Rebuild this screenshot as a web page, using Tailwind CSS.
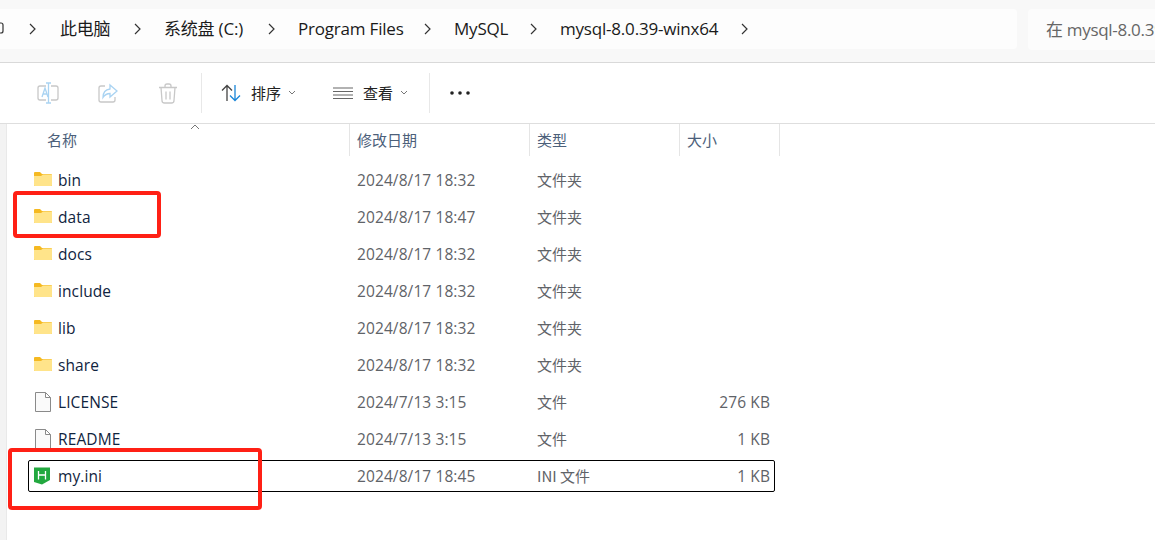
<!DOCTYPE html>
<html lang="zh"><head><meta charset="utf-8">
<script src="https://cdn.jsdelivr.net/npm/@tailwindcss/browser@4"></script>
</head>
<body class="bg-white overflow-hidden">
<div class="relative w-[1155px] h-[540px] overflow-hidden font-['Open_Sans','Noto_Sans_CJK_SC',sans-serif] text-[#1a1a1a]">
  <!-- address bar -->
  <div class="h-[63px] bg-[#f8f8f8] border-b border-[#d9d9d9] pt-[9px] flex gap-[11px]">
    <div class="w-[1017px] h-[40px] bg-[#fdfdfd] rounded-r-[4px] flex items-center text-[17px] tracking-[-0.2px]">
      <svg class="ml-[-7px] w-[12px] h-[16px] mt-[-1px] shrink-0" viewBox="0 0 12 16" fill="none" stroke="#333" stroke-width="1.2"><rect x="-2" y="2" width="12" height="10" rx="2"/><path d="M3 14h4"/></svg>
      <svg class="ml-[23px] w-[9px] h-[12px] shrink-0" viewBox="0 0 9 12" fill="none" stroke="#333" stroke-width="1.2"><path d="M2 1l5 5-5 5"/></svg>
      <span class="ml-[23px] w-[55px] shrink-0">此电脑</span>
      <svg class="ml-[18px] w-[9px] h-[12px] shrink-0" viewBox="0 0 9 12" fill="none" stroke="#333" stroke-width="1.2"><path d="M2 1l5 5-5 5"/></svg>
      <span class="ml-[22px] w-[82px] shrink-0 whitespace-nowrap">系统盘 (C:)</span>
      <svg class="ml-[21px] w-[9px] h-[12px] shrink-0" viewBox="0 0 9 12" fill="none" stroke="#333" stroke-width="1.2"><path d="M2 1l5 5-5 5"/></svg>
      <span class="ml-[22px] w-[105px] shrink-0 whitespace-nowrap">Program Files</span>
      <svg class="ml-[20px] w-[9px] h-[12px] shrink-0" viewBox="0 0 9 12" fill="none" stroke="#333" stroke-width="1.2"><path d="M2 1l5 5-5 5"/></svg>
      <span class="ml-[22px] w-[55px] shrink-0 whitespace-nowrap">MySQL</span>
      <svg class="ml-[20px] w-[9px] h-[12px] shrink-0" viewBox="0 0 9 12" fill="none" stroke="#333" stroke-width="1.2"><path d="M2 1l5 5-5 5"/></svg>
      <span class="ml-[22px] w-[159px] shrink-0 whitespace-nowrap">mysql-8.0.39-winx64</span>
      <svg class="ml-[21px] w-[9px] h-[12px] shrink-0" viewBox="0 0 9 12" fill="none" stroke="#333" stroke-width="1.2"><path d="M2 1l5 5-5 5"/></svg>
    </div>
    <div class="flex-1 h-[41px] bg-[#fcfcfc] rounded-l-[4px] flex items-center pl-[18px] text-[17px] text-[#666] whitespace-nowrap overflow-hidden tracking-[-0.3px]">在 mysql-8.0.39-winx64 中搜索</div>
  </div>
  <!-- toolbar -->
  <div class="h-[61px] bg-white border-b border-[#dedede] flex items-center text-[15px]">
    <svg class="ml-[37px] w-[22px] h-[22px] shrink-0" viewBox="0 0 22 22" fill="none" stroke-width="1.3"><path d="M9 4H3a2 2 0 0 0-2 2v10a2 2 0 0 0 2 2h6M14 4h5a2 2 0 0 1 2 2v10a2 2 0 0 1-2 2h-5" stroke="#c8c8c8"/><path d="M11.500 1v20M9 1h5M9 21h5" stroke="#a9d3f2"/><path d="M5 15l3-9 3 9M6 12h4" stroke="#a9d3f2"/></svg>
    <svg class="ml-[39px] w-[20px] h-[21px] shrink-0" viewBox="0 0 20 21" fill="none" stroke-width="1.3"><path d="M7 3H3a2 2 0 0 0-2 2v12a2 2 0 0 0 2 2h12a2 2 0 0 0 2-2v-3" stroke="#c8c8c8"/><path d="M12 2l7 6-7 6v-3.500c-3 0-5 1-7 4 0-5 3-8 7-8.500z" stroke="#a9d3f2"/></svg>
    <svg class="ml-[40px] w-[20px] h-[21px] shrink-0" viewBox="0 0 20 21" fill="none" stroke="#c8c8c8" stroke-width="1.3"><path d="M1 4.500h18M7 4.500V3a2 2 0 0 1 2-2h2a2 2 0 0 1 2 2v1.500M3 4.500l1 13a2.500 2.500 0 0 0 2.500 2.500h7a2.500 2.500 0 0 0 2.500-2.500l1-13M8 8.500v8M12 8.500v8"/></svg>
    <div class="ml-[23px] w-px h-[40px] bg-[#e8e8e8] shrink-0"></div>
    <svg class="ml-[19px] w-[21px] h-[18px] shrink-0" viewBox="0 0 21 18" fill="none" stroke-width="1.3"><path d="M6 17V1.500M1 6.500l5-5 5 5" stroke="#444"/><path d="M14 1v15.500M9 11.500l5 5 5-5" stroke="#1a86d8"/></svg>
    <span class="ml-[9px] w-[30px] shrink-0 font-['Noto_Sans_CJK_SC'] text-[#222]">排序</span>
    <svg class="ml-[7px] w-[8px] h-[6px] shrink-0" viewBox="0 0 8 6" fill="none" stroke="#777"><path d="M1 1l3 3 3-3"/></svg>
    <svg class="ml-[37px] w-[20px] h-[13px] shrink-0" viewBox="0 0 20 13" fill="none" stroke="#666" stroke-width="1.200"><path d="M0 1h20M0 4.500h20M0 8h20M0 11.500h20"/></svg>
    <span class="ml-[10px] w-[30px] shrink-0 font-['Noto_Sans_CJK_SC'] text-[#222]">查看</span>
    <svg class="ml-[7px] w-[8px] h-[6px] shrink-0" viewBox="0 0 8 6" fill="none" stroke="#777"><path d="M1 1l3 3 3-3"/></svg>
    <div class="ml-[21px] w-px h-[40px] bg-[#e8e8e8] shrink-0"></div>
    <svg class="ml-[20px] w-[20px] h-[4px] shrink-0" viewBox="0 0 20 4" fill="#222"><circle cx="2" cy="2" r="1.800"/><circle cx="10" cy="2" r="1.800"/><circle cx="18" cy="2" r="1.800"/></svg>
  </div>
  <!-- list -->
  <div class="flex h-[416px]">
    <div class="w-[7px] bg-[#f3f3f3] border-r border-[#e9e9e9]"></div>
    <div class="flex-1 relative">
      <!-- header -->
      <div class="h-[32px] flex items-stretch text-[15px] text-[#4c607a] font-['Noto_Sans_CJK_SC']">
        <div class="w-[343px] pl-[40px] pt-[5px] border-r border-[#e5e5e5] relative">名称
          <svg class="absolute left-[183px] top-[0px] w-[10px] h-[6px]" viewBox="0 0 10 6" fill="none" stroke="#777"><path d="M1 5l4-4 4 4"/></svg>
        </div>
        <div class="w-[180px] pl-[7px] pt-[5px] border-r border-[#e5e5e5]">修改日期</div>
        <div class="w-[150px] pl-[7px] pt-[5px] border-r border-[#e5e5e5]">类型</div>
        <div class="w-[100px] pl-[7px] pt-[5px] border-r border-[#e5e5e5]">大小</div>
      </div>
      <!-- rows -->
      <div class="pt-[6px] pl-[21px] w-[768px] text-[15.500px] tracking-[0.1px] text-[#5f6368]">
        <div class="h-[37px] flex items-center px-[1px]"><div class="w-[328px] flex items-center pl-[5px]"><svg class="w-[18px] h-[14px] mr-[6px] mt-[-3px]" viewBox="0 0 18 14"><path d="M0 1a1 1 0 0 1 1-1h5l2 2h9a1 1 0 0 1 1 1v10a1 1 0 0 1-1 1H1a1 1 0 0 1-1-1z" fill="#f5b921"/><path d="M0 4h7l2-1.500h9V13a1 1 0 0 1-1 1H1a1 1 0 0 1-1-1z" fill="#ffe48a"/></svg><span class="text-[#10243e]">bin</span></div><span class="w-[180px]">2024/8/17 18:32</span><span class="w-[150px] font-['Noto_Sans_CJK_SC'] text-[15px] tracking-normal mt-[-1px]">文件夹</span><span class="w-[83px] text-right"></span></div>
        <div class="h-[37px] flex items-center px-[1px]"><div class="w-[328px] flex items-center pl-[5px]"><svg class="w-[18px] h-[14px] mr-[6px] mt-[-3px]" viewBox="0 0 18 14"><path d="M0 1a1 1 0 0 1 1-1h5l2 2h9a1 1 0 0 1 1 1v10a1 1 0 0 1-1 1H1a1 1 0 0 1-1-1z" fill="#f5b921"/><path d="M0 4h7l2-1.500h9V13a1 1 0 0 1-1 1H1a1 1 0 0 1-1-1z" fill="#ffe48a"/></svg><span class="text-[#10243e]">data</span></div><span class="w-[180px]">2024/8/17 18:47</span><span class="w-[150px] font-['Noto_Sans_CJK_SC'] text-[15px] tracking-normal mt-[-1px]">文件夹</span><span class="w-[83px] text-right"></span></div>
        <div class="h-[37px] flex items-center px-[1px]"><div class="w-[328px] flex items-center pl-[5px]"><svg class="w-[18px] h-[14px] mr-[6px] mt-[-3px]" viewBox="0 0 18 14"><path d="M0 1a1 1 0 0 1 1-1h5l2 2h9a1 1 0 0 1 1 1v10a1 1 0 0 1-1 1H1a1 1 0 0 1-1-1z" fill="#f5b921"/><path d="M0 4h7l2-1.500h9V13a1 1 0 0 1-1 1H1a1 1 0 0 1-1-1z" fill="#ffe48a"/></svg><span class="text-[#10243e]">docs</span></div><span class="w-[180px]">2024/8/17 18:32</span><span class="w-[150px] font-['Noto_Sans_CJK_SC'] text-[15px] tracking-normal mt-[-1px]">文件夹</span><span class="w-[83px] text-right"></span></div>
        <div class="h-[37px] flex items-center px-[1px]"><div class="w-[328px] flex items-center pl-[5px]"><svg class="w-[18px] h-[14px] mr-[6px] mt-[-3px]" viewBox="0 0 18 14"><path d="M0 1a1 1 0 0 1 1-1h5l2 2h9a1 1 0 0 1 1 1v10a1 1 0 0 1-1 1H1a1 1 0 0 1-1-1z" fill="#f5b921"/><path d="M0 4h7l2-1.500h9V13a1 1 0 0 1-1 1H1a1 1 0 0 1-1-1z" fill="#ffe48a"/></svg><span class="text-[#10243e]">include</span></div><span class="w-[180px]">2024/8/17 18:32</span><span class="w-[150px] font-['Noto_Sans_CJK_SC'] text-[15px] tracking-normal mt-[-1px]">文件夹</span><span class="w-[83px] text-right"></span></div>
        <div class="h-[37px] flex items-center px-[1px]"><div class="w-[328px] flex items-center pl-[5px]"><svg class="w-[18px] h-[14px] mr-[6px] mt-[-3px]" viewBox="0 0 18 14"><path d="M0 1a1 1 0 0 1 1-1h5l2 2h9a1 1 0 0 1 1 1v10a1 1 0 0 1-1 1H1a1 1 0 0 1-1-1z" fill="#f5b921"/><path d="M0 4h7l2-1.500h9V13a1 1 0 0 1-1 1H1a1 1 0 0 1-1-1z" fill="#ffe48a"/></svg><span class="text-[#10243e]">lib</span></div><span class="w-[180px]">2024/8/17 18:32</span><span class="w-[150px] font-['Noto_Sans_CJK_SC'] text-[15px] tracking-normal mt-[-1px]">文件夹</span><span class="w-[83px] text-right"></span></div>
        <div class="h-[37px] flex items-center px-[1px]"><div class="w-[328px] flex items-center pl-[5px]"><svg class="w-[18px] h-[14px] mr-[6px] mt-[-3px]" viewBox="0 0 18 14"><path d="M0 1a1 1 0 0 1 1-1h5l2 2h9a1 1 0 0 1 1 1v10a1 1 0 0 1-1 1H1a1 1 0 0 1-1-1z" fill="#f5b921"/><path d="M0 4h7l2-1.500h9V13a1 1 0 0 1-1 1H1a1 1 0 0 1-1-1z" fill="#ffe48a"/></svg><span class="text-[#10243e]">share</span></div><span class="w-[180px]">2024/8/17 18:32</span><span class="w-[150px] font-['Noto_Sans_CJK_SC'] text-[15px] tracking-normal mt-[-1px]">文件夹</span><span class="w-[83px] text-right"></span></div>
        <div class="h-[37px] flex items-center px-[1px]"><div class="w-[328px] flex items-center pl-[6px]"><svg class="w-[16px] h-[20px] mr-[7px] mt-[-2px]" viewBox="0 0 16 20" fill="#fafafa" stroke="#8a8a8a"><path d="M.5.500h10l5 5v14H.500zM10.500.500v5h5"/></svg><span class="text-[#10243e]">LICENSE</span></div><span class="w-[180px]">2024/7/13 3:15</span><span class="w-[150px] font-['Noto_Sans_CJK_SC'] text-[15px] tracking-normal mt-[-1px]">文件</span><span class="w-[83px] text-right">276 KB</span></div>
        <div class="h-[37px] flex items-center px-[1px]"><div class="w-[328px] flex items-center pl-[6px]"><svg class="w-[16px] h-[20px] mr-[7px] mt-[-2px]" viewBox="0 0 16 20" fill="#fafafa" stroke="#8a8a8a"><path d="M.5.500h10l5 5v14H.500zM10.500.500v5h5"/></svg><span class="text-[#10243e]">README</span></div><span class="w-[180px]">2024/7/13 3:15</span><span class="w-[150px] font-['Noto_Sans_CJK_SC'] text-[15px] tracking-normal mt-[-1px]">文件</span><span class="w-[83px] text-right">1 KB</span></div>
        <div class="h-[37px] flex items-center"><div class="h-[32px] w-full border border-black rounded-[2px] flex items-center mt-[-1px] pt-[2px]"><div class="w-[328px] flex items-center pl-[5px]"><svg class="w-[16px] h-[18px] mr-[8px] mt-[-3px]" viewBox="0 0 16 18"><path d="M0 0.500h16v12.500L8 17.500 0 15z" fill="#22a83f"/><path d="M4.500 4v8.500M11.500 4v8.500M4.500 8h7" stroke="#fff" stroke-width="1.300" fill="none"/></svg><span class="text-[#10243e]">my.ini</span></div><span class="w-[180px]">2024/8/17 18:45</span><span class="w-[150px] font-['Noto_Sans_CJK_SC'] text-[15px] tracking-normal mt-[-1px]">INI 文件</span><span class="w-[83px] text-right">1 KB</span></div></div>
      </div>
    </div>
  </div>
  <!-- annotations -->
  <div class="absolute left-[13px] top-[191px] w-[148px] h-[47px] border-[4px] border-[#ff2015] rounded-[4px]"></div>
  <div class="absolute left-[8px] top-[448px] w-[254px] h-[62px] border-[4px] border-[#ff2015] rounded-[4px]"></div>
</div>
</body></html>
